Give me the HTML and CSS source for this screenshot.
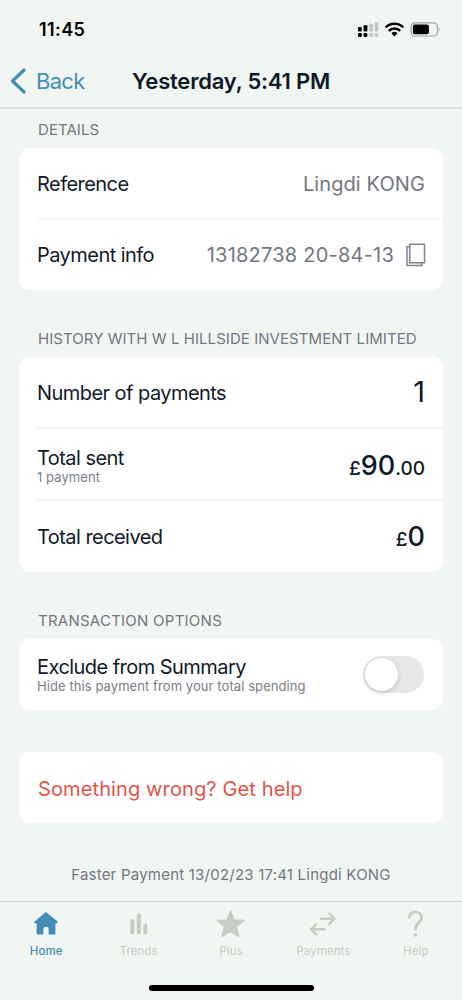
FILE: index.html
```html
<!DOCTYPE html>
<html lang="en">
<head>
<meta charset="utf-8">
<meta name="viewport" content="width=device-width, initial-scale=1">
<title>Payment details</title>
<link rel="stylesheet" href="styles.css">
</head>
<body>
<div class="screen">
  <header class="header">
    <div class="status">
      <span class="time">11:45</span>
      <svg width="84" height="20" viewBox="0 0 84 20">
        <g fill="#000">
          <rect x="1" y="7" width="3.8" height="4.6" rx="1"/><rect x="6.6" y="5.2" width="3.8" height="6.4" rx="1"/>
          <rect x="1" y="13" width="3.8" height="4" rx="1.3"/><rect x="6.6" y="13" width="3.8" height="4" rx="1.3"/>
        </g>
        <g fill="#c3c7c4">
          <rect x="12.2" y="3.8" width="3.7" height="7.6" rx="1"/><rect x="17.6" y="2.2" width="3.7" height="9.2" rx="1"/>
          <rect x="12.2" y="13" width="3.7" height="4" rx="1.3"/><rect x="17.6" y="13" width="3.7" height="4" rx="1.3"/>
        </g>
        <g fill="none" stroke="#000" stroke-width="2.5">
          <path d="M28.7 7.4a12.6 12.6 0 0 1 17.6 0"/>
          <path d="M31.8 10.8a8.2 8.2 0 0 1 11.4 0"/>
        </g>
        <path d="M34.4 13.3a4.5 4.5 0 0 1 6.2 0L37.5 16.4Z" fill="#000"/>
        <rect x="54.1" y="2.8" width="26.3" height="13.2" rx="4" fill="none" stroke="#9fa3a0" stroke-width="1.2"/>
        <rect x="55.9" y="4.5" width="16" height="9.8" rx="2" fill="#000"/>
        <path d="M81.8 7.2q2 2.2 0 4.4Z" fill="#9fa3a0"/>
      </svg>
    </div>
    <nav class="nav">
      <a class="back">
        <svg width="16" height="26" viewBox="0 0 16 26" fill="none" stroke="currentColor" stroke-width="3.2" stroke-linecap="round" stroke-linejoin="round"><path d="M14 2L2.5 13L14 24"/></svg>
        <span>Back</span>
      </a>
      <h1 class="title">Yesterday, 5:41 PM</h1>
    </nav>
  </header>

  <main class="content">
    <h2 class="label first">DETAILS</h2>
    <section class="card details">
      <div class="row"><span class="name">Reference</span><span class="value">Lingdi KONG</span></div>
      <div class="row">
        <span class="name">Payment info</span>
        <span class="copyable"><span class="value account">13182738 20-84-13</span>
          <svg width="20" height="24" viewBox="0 0 20 24" fill="none" stroke="#808491" stroke-width="1.5"><path d="M3.7 1.3H18.5V19.8H3.7V1.3Z"/><path d="M3.7 3.8H1V22.4H16V19.8"/></svg>
        </span>
      </div>
    </section>

    <h2 class="label">HISTORY WITH W L HILLSIDE INVESTMENT LIMITED</h2>
    <section class="card">
      <div class="row"><span class="name">Number of payments</span><span class="count">1</span></div>
      <div class="row">
        <div class="stack"><span class="name">Total sent</span><span class="hint">1 payment</span></div>
        <span class="money"><small>£</small>90<small>.00</small></span>
      </div>
      <div class="row"><span class="name">Total received</span><span class="money"><small>£</small>0</span></div>
    </section>

    <h2 class="label options">TRANSACTION OPTIONS</h2>
    <section class="card">
      <div class="row">
        <div class="stack"><span class="name">Exclude from Summary</span><span class="hint">Hide this payment from your total spending</span></div>
        <span class="switch"><span class="knob"></span></span>
      </div>
    </section>

    <section class="card help">
      <div class="row"><span class="danger">Something wrong? Get help</span></div>
    </section>
    <p class="footnote">Faster Payment 13/02/23 17:41 Lingdi KONG</p>
  </main>

  <footer class="tabs">
    <div class="tabrow">
      <a class="tab active">
        <svg width="32" height="32" viewBox="0 0 32 32" fill="currentColor" stroke="currentColor" stroke-width="2" stroke-linejoin="round"><path d="M16 5.2L5.2 14.3H7.6V25.5H12.4V21.4a3.6 3.6 0 0 1 7.2 0V25.5H24.4V14.3H26.8Z"/></svg>
        <span>Home</span>
      </a>
      <a class="tab">
        <svg width="32" height="32" viewBox="0 0 32 32" fill="none" stroke="currentColor" stroke-width="4" stroke-linecap="round"><path d="M9.3 12.8V24.6M15.8 7.2V24.6M22.3 18V24.6"/></svg>
        <span>Trends</span>
      </a>
      <a class="tab">
        <svg width="32" height="32" viewBox="0 0 32 32" fill="currentColor" stroke="currentColor" stroke-width="1.5" stroke-linejoin="round"><path d="M15.5 2.8L18.9 11.9L29 12.5L21.2 18.7L23.9 28.3L15.5 23L7.1 28.3L9.8 18.7L2 12.5L12.1 11.9Z"/></svg>
        <span>Plus</span>
      </a>
      <a class="tab">
        <svg width="32" height="32" viewBox="0 0 32 32" fill="none" stroke="currentColor" stroke-width="2.4" stroke-linecap="round" stroke-linejoin="round"><path d="M14 10.7H27.5M22.3 5.5L27.5 10.7L22.3 15.9M17.5 21.3H4M9.2 16.1L4 21.3L9.2 26.5"/></svg>
        <span>Payments</span>
      </a>
      <a class="tab">
        <svg width="32" height="32" viewBox="0 0 32 32" fill="none" stroke="currentColor" stroke-width="2.8" stroke-linecap="round"><path d="M9.3 9.3C9.7 6 12.2 4.1 15.4 4.1C19 4.1 21.6 6.4 21.6 9.7C21.6 14.2 15.4 14.9 15.4 21"/><circle cx="15.4" cy="26.8" r="1.9" fill="currentColor" stroke="none"/></svg>
        <span>Help</span>
      </a>
    </div>
    <div class="home-bar"></div>
  </footer>
</div>
</body>
</html>
```
FILE: styles.css
```css
* { box-sizing: border-box; }
body { margin: 0; background: #f1f6f3; font-family: Inter, "Liberation Sans", sans-serif; color: #101927; }
h1, h2, p { margin: 0; font-weight: 400; }
svg { display: block; flex: none; }
.screen { height: 1000px; display: flex; flex-direction: column; overflow: hidden; white-space: nowrap; }
.header { height: 109px; border-bottom: 2px solid #e0e4e1; flex: none; }
.status { height: 56px; display: flex; justify-content: space-between; padding: 20px 21px 0 39px; }
.time { font-size: 18px; line-height: 20px; font-weight: 600; letter-spacing: .4px; color: #000; }
.nav { height: 50px; display: flex; align-items: center; padding-left: 10px; }
.back { display: flex; align-items: center; gap: 10px; width: 122px; color: #448db5; font-size: 22px; letter-spacing: -.7px; }
.title { font-size: 22px; font-weight: 600; letter-spacing: -.2px; }
.content { height: 792px; flex: none; padding: 0 19px; }
.label { font-size: 15px; line-height: 20px; padding: 1px 0 0 19px; letter-spacing: .06px; color: #737780; }
.label.first { padding-top: 11px; }
.label.options { letter-spacing: .25px; }
.card { background: #fff; border-radius: 11px; margin: 8px 0 38px; padding-left: 18px; }
.card.help { margin: 42px 0 0; }
.row { height: 72px; display: flex; align-items: center; justify-content: space-between; padding: 2px 18px 0 0; border-bottom: 2px solid #f5f5f6; }
.row:last-child { height: 71px; padding-top: 0; border-bottom: 0; }
.details .row:last-child { height: 70px; }
.help .row:last-child { padding-top: 2px; }
.name { font-size: 20px; line-height: 24px; letter-spacing: -.55px; }
.value { font-size: 20px; letter-spacing: .1px; color: #737780; }
.account { letter-spacing: .22px; }
.copyable { display: flex; align-items: center; gap: 12px; margin-right: -1px; }
.stack { display: flex; flex-direction: column; }
.hint { font-size: 13px; line-height: 15px; letter-spacing: .08px; color: #7b7e87; }
.count { font-size: 29px; line-height: 34px; padding-bottom: 2px; }
.money { font-size: 27px; font-weight: 500; }
.money small { font-size: 19px; }
.switch { width: 61px; height: 37px; border-radius: 19px; background: #e7e7e9; padding: 2px; margin-right: 1px; }
.knob { display: block; width: 33px; height: 33px; border-radius: 50%; background: #fff; box-shadow: 0 2px 5px rgba(0,0,0,.16); }
.danger { font-size: 20px; letter-spacing: .12px; color: #df5548; padding-left: 1px; }
.footnote { text-align: center; font-size: 15px; line-height: 20px; letter-spacing: .22px; color: #737780; margin-top: 42px; }
.tabs { height: 99px; border-top: 1px solid #cfd5d1; }
.tabrow { display: flex; height: 83px; padding-top: 6px; }
.tab { flex: 1; display: flex; flex-direction: column; align-items: center; color: #c7cdc3; font-size: 11.5px; line-height: 16px; letter-spacing: .12px; gap: 3px; }
.tab.active { color: #448db5; font-weight: 500; }
.home-bar { width: 165px; height: 6px; border-radius: 3px; background: #000; margin: 0 auto; }
```
